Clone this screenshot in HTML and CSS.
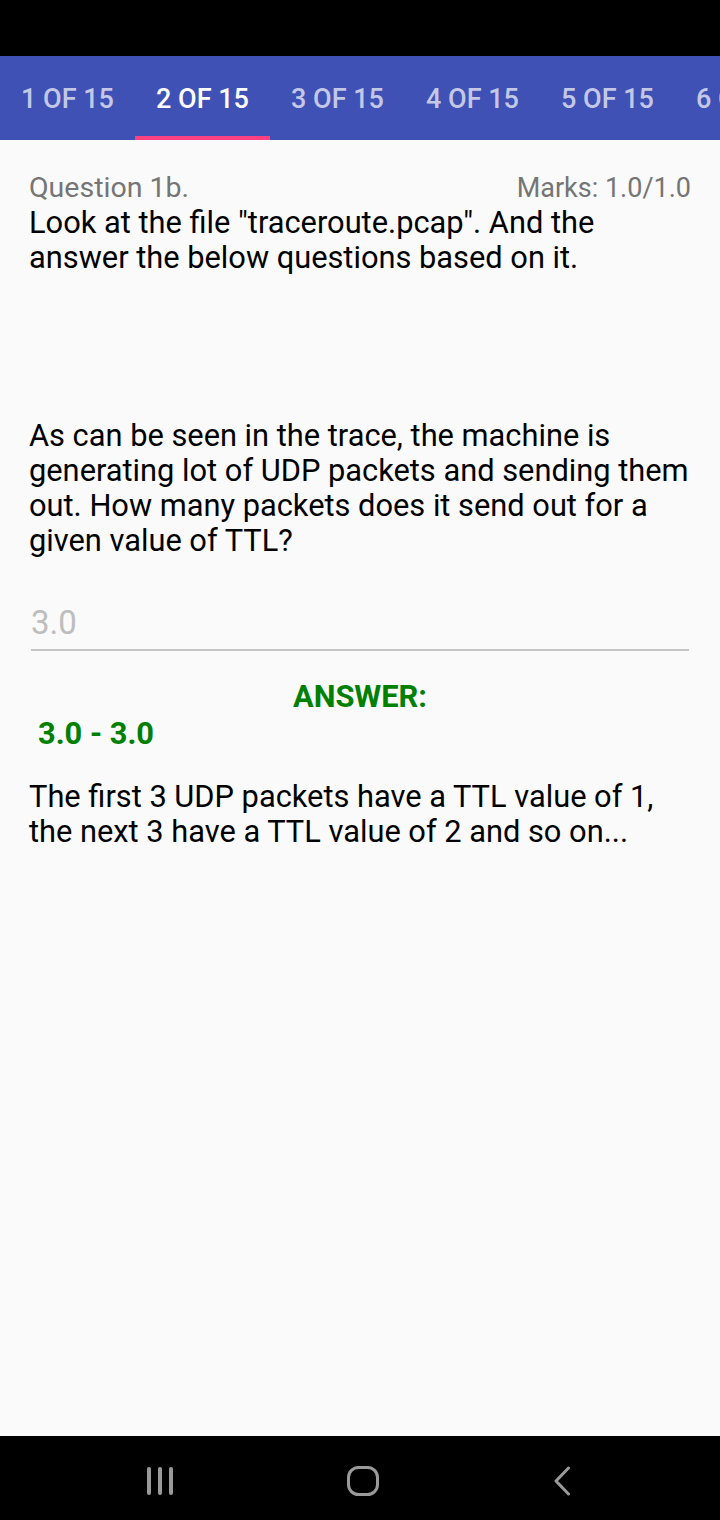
FILE: index.html
```html
<!DOCTYPE html>
<html>
<head>
<meta charset="utf-8">
<link rel="stylesheet" href="styles.css">
</head>
<body>
<div class="screen">
  <div class="statusbar"></div>
  <div class="tabbar">
    <div class="tab">1 OF 15</div>
    <div class="tab active">2 OF 15</div>
    <div class="tab">3 OF 15</div>
    <div class="tab">4 OF 15</div>
    <div class="tab">5 OF 15</div>
    <div class="tab">6 OF 15</div>
  </div>
  <main class="content">
    <div class="qhead">
      <span class="qtitle">Question 1b.</span>
      <span class="marks">Marks: 1.0/1.0</span>
    </div>
    <p class="qtext">Look at the file "traceroute.pcap". And the answer the below questions based on it.</p>
    <p class="qtext second">As can be seen in the trace, the machine is generating lot of UDP packets and sending them out. How many packets does it send out for a given value of TTL?</p>
    <div class="input">3.0</div>
    <div class="answer-label">ANSWER:</div>
    <div class="answer-range">3.0 - 3.0</div>
    <p class="qtext explain">The first 3 UDP packets have a TTL value of 1, the next 3 have a TTL value of 2 and so on...</p>
  </main>
  <div class="navbar">
    <svg class="nav-icon" width="26" height="28" viewBox="0 0 26 28">
      <rect x="0" y="0" width="4" height="28" rx="2" fill="#9a9a9a"/>
      <rect x="11" y="0" width="4" height="28" rx="2" fill="#9a9a9a"/>
      <rect x="22" y="0" width="4" height="28" rx="2" fill="#9a9a9a"/>
    </svg>
    <svg class="nav-icon" width="32" height="30" viewBox="0 0 32 30">
      <rect x="1.5" y="1.5" width="29" height="27" rx="10" fill="none" stroke="#9a9a9a" stroke-width="3"/>
    </svg>
    <svg class="nav-icon" width="18" height="30" viewBox="0 0 18 30">
      <path d="M15.5 2 L3 15 L15.5 28" fill="none" stroke="#9a9a9a" stroke-width="3" stroke-linecap="round" stroke-linejoin="round"/>
    </svg>
  </div>
</div>
</body>
</html>
```
FILE: styles.css
```css
* { box-sizing: border-box; }
html, body { margin: 0; padding: 0; }
body {
  width: 720px;
  height: 1520px;
  overflow: hidden;
  font-family: Roboto, "Noto Sans", sans-serif;
  background: #fafafa;
}
.screen {
  width: 720px;
  height: 1520px;
  display: flex;
  flex-direction: column;
}
.statusbar {
  height: 56px;
  background: #000;
  flex: none;
}
.tabbar {
  height: 84px;
  background: #3f51b5;
  display: flex;
  flex: none;
  overflow: hidden;
}
.tab {
  flex: 0 0 135px;
  width: 135px;
  display: flex;
  align-items: center;
  justify-content: center;
  color: rgba(255,255,255,0.7);
  font-weight: 500;
  font-size: 27px;
  white-space: nowrap;
  border-bottom: 4px solid transparent;
  padding-top: 6px;
}
.tab.active {
  color: #fff;
  border-bottom-color: #ff4081;
}
.content {
  flex: 1;
  padding: 31px 29px 0 29px;
}
.qhead {
  display: flex;
  justify-content: space-between;
  align-items: baseline;
  color: #757575;
  line-height: 34px;
}
.qtitle { font-size: 28.5px; }
.marks { font-size: 27px; }
.qtext {
  margin: 0;
  font-size: 30.8px;
  line-height: 35px;
  color: #000;
}
.qtext.second {
  margin-top: 143px;
}
.input {
  margin: 43px 2px 0 2px;
  font-size: 33px;
  color: #bdbdbd;
  line-height: 44px;
  padding-bottom: 4px;
  border-bottom: 2px solid #c4c4c4;
}
.answer-label {
  margin-top: 28px;
  text-align: center;
  color: #008000;
  font-weight: bold;
  font-size: 30.8px;
  line-height: 36px;
}
.answer-range {
  margin-left: 9px;
  color: #008000;
  font-weight: bold;
  font-size: 30.8px;
  line-height: 38px;
}
.qtext.explain {
  margin-top: 26px;
}
.navbar {
  height: 84px;
  background: #000;
  flex: none;
  display: flex;
  align-items: center;
  justify-content: space-between;
  padding: 5px 149px 0 147px;
}
.nav-icon { display: block; }
```
